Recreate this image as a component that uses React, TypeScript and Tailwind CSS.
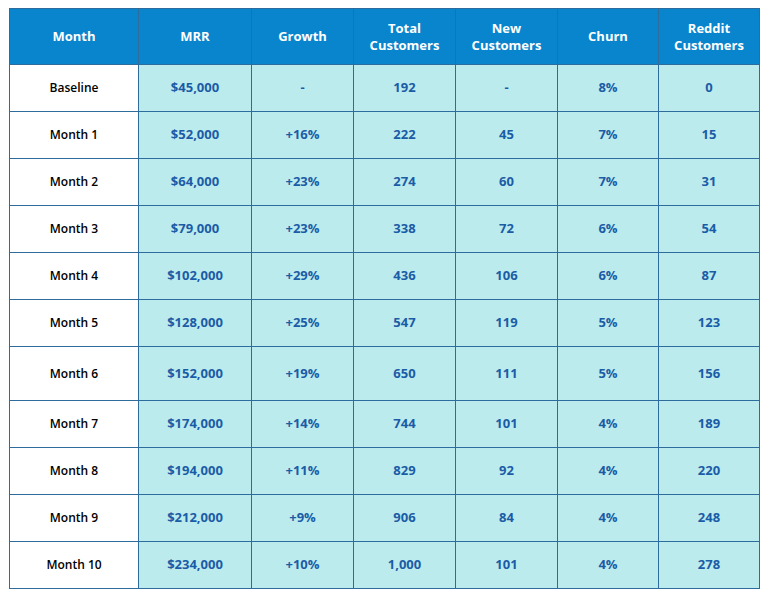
const rows: { month: string; mrr: string; growth: string; total: string; added: string; churn: string; reddit: string; tall?: boolean }[] = [
    { month: 'Baseline', mrr: '$45,000', growth: '-', total: '192', added: '-', churn: '8%', reddit: '0' },
    { month: 'Month 1', mrr: '$52,000', growth: '+16%', total: '222', added: '45', churn: '7%', reddit: '15' },
    { month: 'Month 2', mrr: '$64,000', growth: '+23%', total: '274', added: '60', churn: '7%', reddit: '31' },
    { month: 'Month 3', mrr: '$79,000', growth: '+23%', total: '338', added: '72', churn: '6%', reddit: '54' },
    { month: 'Month 4', mrr: '$102,000', growth: '+29%', total: '436', added: '106', churn: '6%', reddit: '87' },
    { month: 'Month 5', mrr: '$128,000', growth: '+25%', total: '547', added: '119', churn: '5%', reddit: '123' },
    { month: 'Month 6', mrr: '$152,000', growth: '+19%', total: '650', added: '111', churn: '5%', reddit: '156', tall: true },
    { month: 'Month 7', mrr: '$174,000', growth: '+14%', total: '744', added: '101', churn: '4%', reddit: '189' },
    { month: 'Month 8', mrr: '$194,000', growth: '+11%', total: '829', added: '92', churn: '4%', reddit: '220' },
    { month: 'Month 9', mrr: '$212,000', growth: '+9%', total: '906', added: '84', churn: '4%', reddit: '248' },
    { month: 'Month 10', mrr: '$234,000', growth: '+10%', total: '1,000', added: '101', churn: '4%', reddit: '278' },
];

const headers = ['Month', 'MRR', 'Growth', 'Total Customers', 'New Customers', 'Churn', 'Reddit Customers'];
const widths = ['w-[129px]', 'w-[113px]', 'w-[102px]', 'w-[102px]', 'w-[102px]', 'w-[101px]', 'w-[101px]'];

export default function App() {
    return (
        <div className="min-h-[600px] bg-white pt-[8px] pl-[9px] font-['Open_Sans',sans-serif]">
            <table className="table-fixed border-collapse border border-[#2d6c9c] w-[750px]">
                <colgroup>
                    {widths.map((w, i) => (
                        <col key={i} className={w} />
                    ))}
                </colgroup>
                <thead>
                    <tr className="h-[56px] bg-[#0985cd]">
                        {headers.map((h) => (
                            <th
                                key={h}
                                className="border border-[#2d6c9c] px-3 text-center text-[13px] leading-[17px] font-bold text-white"
                            >
                                {h.includes(' ') ? (
                                    <>
                                        {h.split(' ')[0]}
                                        <br />
                                        {h.split(' ')[1]}
                                    </>
                                ) : (
                                    h
                                )}
                            </th>
                        ))}
                    </tr>
                </thead>
                <tbody>
                    {rows.map((r) => (
                        <tr key={r.month} className={r.tall ? 'h-[54px]' : 'h-[47px]'}>
                            <td className="border border-[#2d6c9c] bg-white text-center text-[12px] font-semibold text-black">
                                {r.month}
                            </td>
                            {[r.mrr, r.growth, r.total, r.added, r.churn, r.reddit].map((v, i) => (
                                <td
                                    key={i}
                                    className="border border-[#2d6c9c] bg-[#bcebee] text-center text-[13px] font-bold text-[#1b5ca6]"
                                >
                                    {v}
                                </td>
                            ))}
                        </tr>
                    ))}
                </tbody>
            </table>
        </div>
    );
}
